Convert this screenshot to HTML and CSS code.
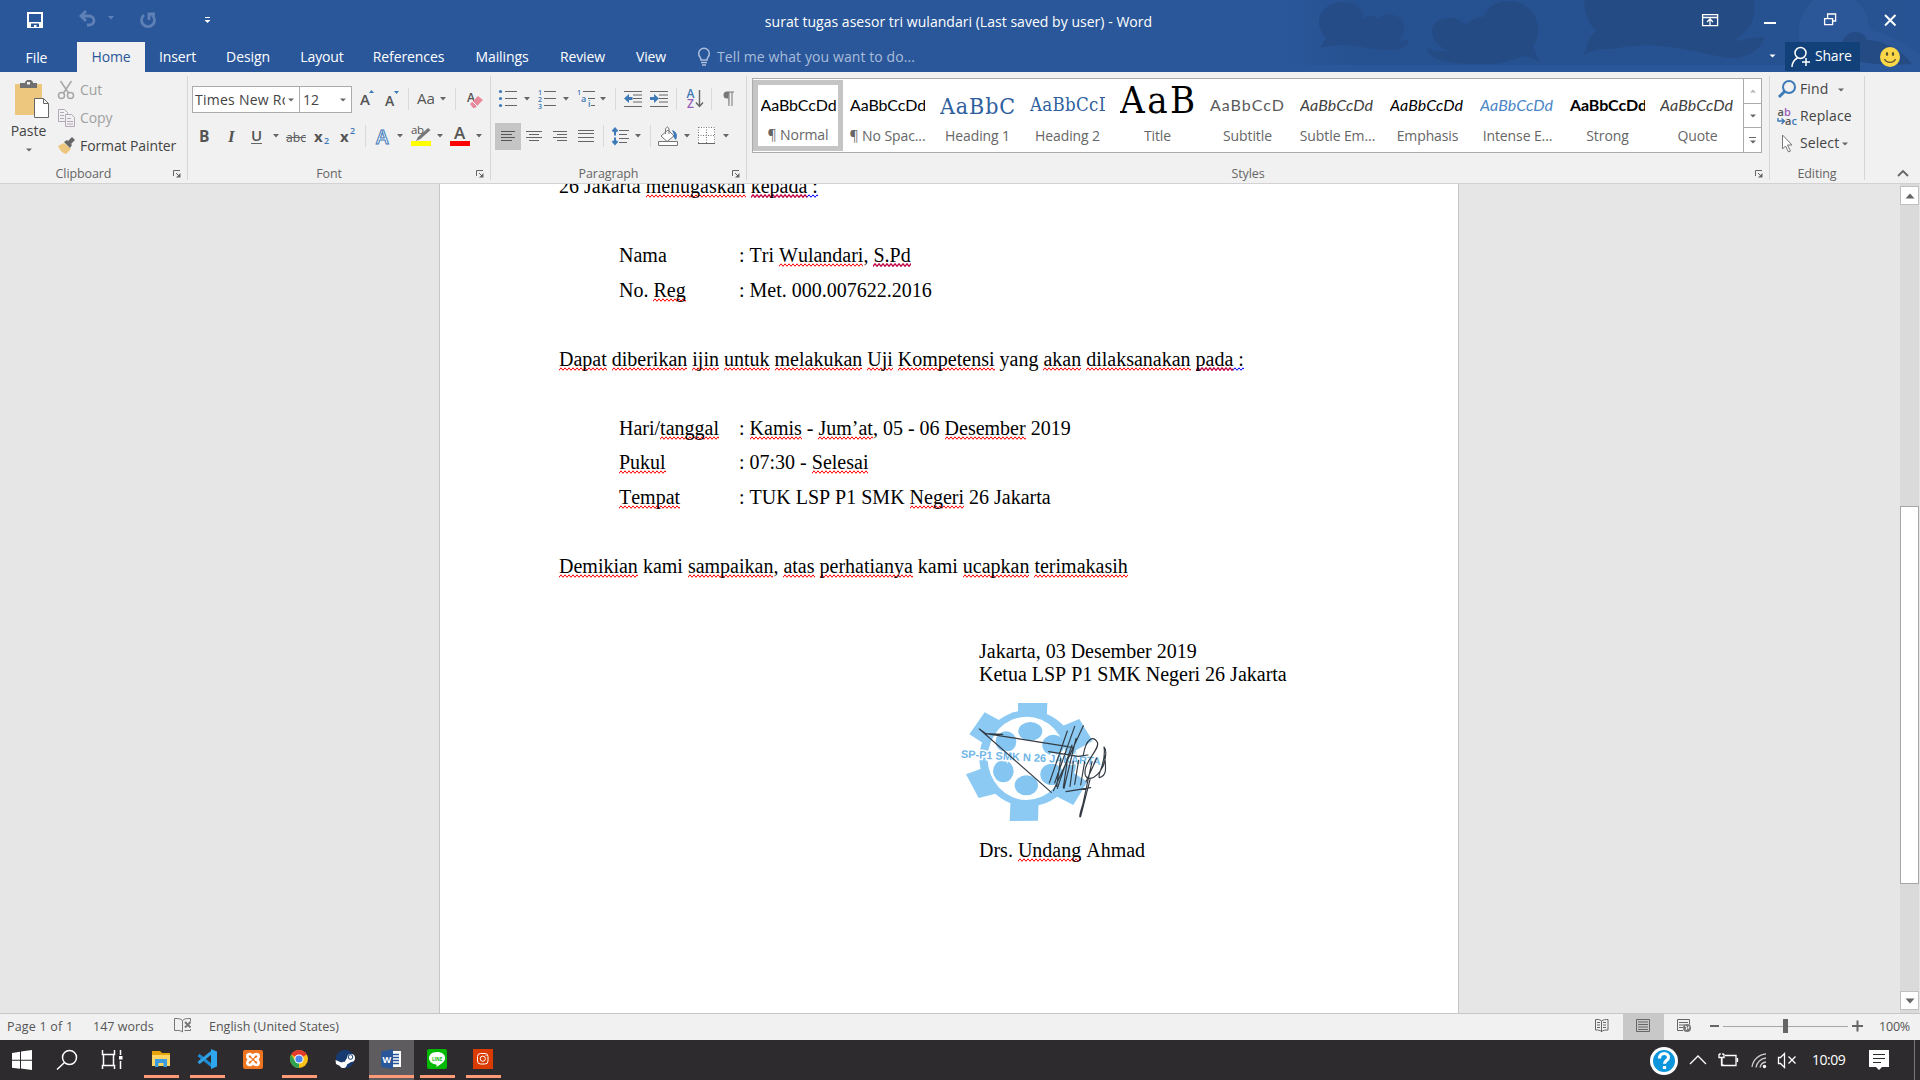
FILE: index.html
```html
<!DOCTYPE html>
<html lang="en">
<head>
<meta charset="utf-8">
<title>surat tugas asesor tri wulandari - Word</title>
<link rel="stylesheet" href="styles.css">
</head>
<body>
<svg class="defs" width="0" height="0">
  <symbol id="dn" viewBox="0 0 6 4"><path d="M0 .4h6L3 3.6z"/></symbol>
  <symbol id="launch" viewBox="0 0 8 8"><path d="M.5 6V.5H7M3 3l3.500 3.500" fill="none" stroke="#666"/><path d="M7.500 3v4.500H3z" fill="#666"/></symbol>
</svg>
<div class="app">
<header class="head">
  <svg class="clouds" width="640" height="65" viewBox="1280 0 640 65">
    <defs><linearGradient id="fade"><stop offset="0" stop-color="#25508f" stop-opacity="0"/><stop offset=".12" stop-color="#25508f" stop-opacity=".8"/><stop offset=".85" stop-color="#25508f" stop-opacity=".75"/><stop offset="1" stop-color="#25508f" stop-opacity=".5"/></linearGradient></defs>
    <path fill="url(#fade)" d="M1280 0h640v65h-640z"/>
    <path fill="#2b5798" d="M1800 42c-4-18 2-30 13-42h42c10 8 14 18 14 30 30 5 40 20 51 24v11h-95z"/>
    <g fill="#244b84">
      <path fill="#254c87" d="M1320 48l6-10c-16-18-2-36 17-36 14 0 20 8 20 17 6-5 12-3 15 0 9-9 26-4 26 8 0 7-3 10-5 14 3 0 6-1 9-1 2 9-19 12-34 9-17-3-34-7-54-1z"/>
      <path d="M1427 48c8 4 16 3 21 3-23-10-20-34 2-33 9 0 12 4 16 7 6-6 14-9 18-8 4-21 50-25 54 10 1 9-2 14-5 20l6 14-14-5c-18 5-23 9-47 8-26 0-50-3-51-16z"/>
      <path d="M1564 0h190c4 22-8 32-20 41 7 0 16-4 30-4-3 16-24 24-42 20-48-10-74-16-109-8-18 0-18 1-29 6l5-16 7-8c-8-8-11-18-12-31z"/>
      <path d="M1842 42c6-14 22-12 25-2 16 0 35 10 45 24-26 2-51 0-69-8z"/>
    </g>
  </svg>
  <div class="titlebar">
    <svg class="quick" width="240" height="42" viewBox="0 0 240 42">
      <path fill="#fff" fill-rule="evenodd" d="M27 12h16v16H27zM29 14h12v8H29zM31 23.500h8V27h-2.500v-2H34v2h-3z"/>
      <g fill="none" stroke="#6081b5" stroke-width="2.800"><path d="M82 16h7a5 4.500 0 0 1 0 9h-2M86 11l-5 5 5 5"/><path d="M144 15a6.500 6.500 0 1 0 8 0M149 20v-6h6"/></g>
      <path fill="#6081b5" d="M108 16h6l-3 3.500z"/><path fill="#fff" d="M205 17h5v1h-5zM204.500 20h6l-3 3z"/>
    </svg>
    <div class="title">surat tugas asesor tri wulandari (Last saved by user) - Word</div>
    <svg width="240" height="42" viewBox="1680 0 240 42" fill="none" stroke="#fff" stroke-width="1.300">
      <path d="M1702.600 14.600h15v11h-15zM1702 17.500h16M1710 25v-6M1707 22l3-3 3 3"/><path stroke-width="2" d="M1764 23h12"/><path d="M1824.600 18.600h8v6h-8zM1827.600 18v-4h8v7h-3"/><path stroke-width="2" d="M1885 15l10.500 10.500M1895.500 15L1885 25.500"/>
    </svg>
  </div>
  <nav class="tabs">
    <span class="tab file">File</span><span class="tab home">Home</span><span class="tab ins">Insert</span><span class="tab des">Design</span><span class="tab lay">Layout</span><span class="tab ref">References</span><span class="tab mail">Mailings</span><span class="tab rev">Review</span><span class="tab view">View</span>
    <svg width="35" height="30" viewBox="682 42 35 30" fill="none" stroke="#a9bddb" stroke-width="1.500"><path d="M701 60c0-3-2.300-3-2.300-6.500a5.300 5.300 0 0 1 10.600 0c0 3.500-2.300 3.500-2.300 6.500z"/><path d="M701 62.500h6M702 65h4"/></svg>
    <span class="tell">Tell me what you want to do...</span>
    <svg class="dnw" width="7" height="4"><use href="#dn"/></svg>
    <div class="share"><svg width="20" height="22" viewBox="0 0 20 22" fill="none" stroke="#fff" stroke-width="1.500"><circle cx="9.500" cy="7" r="5.500"/><path d="M1 21c0-4 2-7 5.500-9M15 12v8M11 16h8"/></svg><span>Share</span></div>
    <svg class="smile" width="22" height="22" viewBox="0 0 22 22"><circle cx="11" cy="11" r="10" fill="#fcd848"/><ellipse cx="8" cy="8" rx="1.200" ry="2" fill="#5b5330"/><ellipse cx="14" cy="8" rx="1.200" ry="2" fill="#5b5330"/><path d="M5.500 13c2 4.500 9 4.500 11 0" fill="none" stroke="#5b5330" stroke-width="1.300"/></svg>
  </nav>
</header>

<section class="ribbon">
  <div class="group clip">
    <div class="body">
      <div class="paste">
        <svg width="38" height="40" viewBox="13 79 38 40"><path fill="#eec77e" d="M15 84h27v31H15z"/><path fill="#707070" d="M20 83h5v-1l2-2h4l2 2v1h4v5H20z"/><path fill="#f1f1f1" d="M27 82h3v2.500h-3z"/><path fill="#fff" stroke="#666" d="M34.500 98.500h9l5 5v14h-14z"/><path fill="none" stroke="#666" d="M43.500 98.500v5h5"/></svg>
        <span>Paste</span><svg class="dng" width="6" height="4"><use href="#dn"/></svg>
      </div>
      <div class="cmds">
        <div class="cmd off"><svg width="18" height="20" viewBox="57 79 18 20" fill="none" stroke="#a6a6a6" stroke-width="1.500"><path d="M60.500 80l8 12M71.500 80l-8 12"/><circle cx="61.500" cy="94.500" r="3"/><circle cx="70.500" cy="94.500" r="3"/></svg><span>Cut</span></div>
        <div class="cmd off"><svg width="18" height="20" viewBox="57 107 18 20" fill="none" stroke="#b2a8b6"><path d="M65 120.500h-6.500v-12h6l3 3v1.500M60 111.500h4M60 114.500h4M60 117.500h4" /><path fill="#f1f1f1" d="M65.500 113.500h6l3 3v9h-9z"/><path d="M67 117.500h4M67 120.500h6M67 123h6"/></svg><span>Copy</span></div>
        <div class="cmd"><svg width="18" height="20" viewBox="57 135 18 20"><path fill="#eec77e" d="M58 145l6-3 7 6-5 5c-4-1-6-4-8-8z"/><path fill="#666" d="M64 141l3-2 1 1 4-4 3 3-4 4 1 1-2 3z"/></svg><span>Format Painter</span></div>
      </div>
    </div>
    <div class="cap"><span>Clipboard</span><svg class="lau" width="8" height="8"><use href="#launch"/></svg></div>
  </div>

  <div class="group font">
    <div class="body col">
      <div class="row">
        <div class="combo fam"><span>Times New Ro</span><svg class="dng" width="6" height="4"><use href="#dn"/></svg></div>
        <div class="combo size"><span>12</span><svg class="dng" width="6" height="4"><use href="#dn"/></svg></div>
        <svg width="136" height="36" viewBox="352 82 136 36">
          <g class="ic"><text class="sb" x="360" y="105" font-size="15">A</text><text class="sb" x="385" y="105.500" font-size="14">A</text><text class="md" x="417" y="104" font-size="15" textLength="18" lengthAdjust="spacingAndGlyphs">Aa</text><text class="sb" x="467" y="102" font-size="12">A</text></g>
          <path fill="#3e7ab8" d="M369 93l2.500-3 2.500 3zM394 91h5l-2.500 3z"/><path fill="#666" d="M440 97h6l-3 3.500z"/>
          <path stroke="#dadada" d="M408.500 88v22M455.500 88v22"/><path fill="#e98a9c" d="M470 104l8-8 5 4-8 8h-2z"/><path stroke="#fff" d="M472 101l5 5"/>
        </svg>
      </div>
      <div class="row">
        <svg width="300" height="36" viewBox="189 118 300 36">
          <g class="ic"><text class="bd" x="199" y="142" font-size="15.500">B</text><text x="228" y="142" font-size="17" class="ser">I</text><text class="sb" x="251" y="141" font-size="15">U</text><text x="286" y="142" font-size="13.500" textLength="20" lengthAdjust="spacingAndGlyphs">abc</text><path d="M286 137.500h20" stroke="#666"/><text class="bd" x="314" y="142" font-size="15">x</text><text class="bd" x="340" y="142" font-size="15">x</text></g>
          <g class="blu"><text class="sb" x="324" y="144" font-size="9">2</text><text class="sb" x="350" y="134" font-size="9">2</text></g>
          <text x="376" y="143.500" font-size="19" font-weight="600" class="glow">A</text>
          <path stroke="#dadada" d="M365.500 125v22"/>
          <g fill="#666"><path d="M273 134h6l-3 3.500zM397 134h6l-3 3.500zM437 134h6l-3 3.500zM476 134h6l-3 3.500z"/></g>
          <text class="ic md" x="411" y="134" font-size="11.500" textLength="13">ab</text><path fill="#777" d="M416 141l2-4 10-9 2.500 2-10 9z"/><path fill="#ff0" d="M411 141h20v5h-20z"/>
          <text class="ic sb" x="454" y="139" font-size="17">A</text><path fill="red" d="M450 141h20v5h-20z"/>
          <path stroke="#666" d="M251 143.500h11"/>
        </svg>
      </div>
    </div>
    <div class="cap"><span>Font</span><svg class="lau" width="8" height="8"><use href="#launch"/></svg></div>
  </div>

  <div class="group para">
    <div class="body col">
      <div class="row">
        <svg width="252" height="36" viewBox="492 82 252 36">
          <g fill="#3e7ab8"><circle cx="500.500" cy="91.500" r="1.600"/><circle cx="500.500" cy="98.500" r="1.600"/><circle cx="500.500" cy="105.500" r="1.600"/></g>
          <g class="blu sb" font-size="7"><text x="538" y="95">1</text><text x="538" y="102">2</text><text x="538" y="108.500">3</text><text x="577" y="95">1</text><text x="581" y="102" font-size="9">a</text><text x="588" y="107" font-size="9">i</text></g>
          <path stroke="#666" d="M505 91.500h12M505 98.500h12M505 105.500h12M544 91.500h12M544 98.500h12M544 105.500h12M583 91.500h12M588 98.500h7M591 105.500h4M624 91.500h18M633 95h9M633 98.500h9M633 102h9M624 106.500h18M650 91.500h18M659 95h9M659 98.500h9M659 102h9M650 106.500h18"/>
          <path fill="#666" d="M524 97h6l-3 3.500zM563 97h6l-3 3.500zM600 97h6l-3 3.500z"/>
          <path stroke="#dadada" d="M615.500 88v22M676.500 88v22M711.500 88v22"/>
          <path fill="#3e7ab8" d="M624 98.500l5-4.500v3h3.500v3H629v3zM659 98.500l-5-4.500v3h-4v3h4v3z"/>
          <text class="blu sb" x="686.500" y="98" font-size="12">A</text><text class="pur sb" x="687" y="108" font-size="12">Z</text><path fill="none" stroke="#666" stroke-width="1.400" d="M699.500 90v16M696 102.500l3.500 4 3.500-4"/>
          <path fill="#777" d="M727 92.500h6M728 91.500v7h-1a3.500 3.500 0 0 1 0-7h7v1h-1.500V106h-1V92.500h-2V106h-1z"/>
        </svg>
      </div>
      <div class="row">
        <svg width="252" height="36" viewBox="492 118 252 36">
          <path fill="#c5c5c5" d="M495 123h26v27h-26z"/>
          <path stroke="#555" d="M501 131.500h14M501 134.500h11M501 137.500h14M501 140.500h11"/>
          <path stroke="#666" d="M526 131.500h16M529 134.500h10M526 137.500h16M529 140.500h10M553 131.500h14M557 134.500h10M553 137.500h14M557 140.500h10M578 130.500h16M578 133.500h16M578 137.500h16M578 141.500h16M619 130.500h10M619 134.500h8M619 138.500h10M619 142.500h8"/>
          <path fill="none" stroke="#3e7ab8" stroke-width="2" d="M615 128.500v15.500M612.500 131.500l2.500-3 2.500 3M612.500 141l2.500 3 2.500-3"/><path stroke="#f1f1f1" stroke-width="2" d="M613 136.500h4"/>
          <path stroke="#dadada" d="M603.500 125v22M650.500 125v22"/><path fill="#666" d="M635 134h6l-3 3.500zM684 134h6l-3 3.500zM723 134h6l-3 3.500z"/>
          <path fill="#fff" stroke="#777" d="M661 136l7-6 6 6-7 5.500zM665.500 134v-5q2-4 3.500 0v5M658.500 141.500h19v4h-19z"/><path fill="#3e7ab8" d="M672 130c5 2 6 5 4 10-2-2-3-3-2-5z"/>
          <path fill="#fff" d="M698 127h17v16h-17z"/><path fill="none" stroke="#777" stroke-dasharray="1 1.500" d="M698.500 127.500h16v16M698.500 127v16M706.500 127v16M698 135.500h17"/><path stroke="#666" d="M698 143.500h17"/>
        </svg>
      </div>
    </div>
    <div class="cap"><span>Paragraph</span><svg class="lau" width="8" height="8"><use href="#launch"/></svg></div>
  </div>

  <div class="group styles">
    <div class="body">
      <div class="gallery">
        <div class="st sel"><b class="pv">AaBbCcDd</b><span>¶ Normal</span></div>
        <div class="st"><b class="pv">AaBbCcDd</b><span>¶ No Spac...</span></div>
        <div class="st"><b class="pv h1">AaBbC</b><span>Heading 1</span></div>
        <div class="st"><b class="pv h2">AaBbCcD</b><span>Heading 2</span></div>
        <div class="st"><b class="pv ti">AaB</b><span>Title</span></div>
        <div class="st"><b class="pv su">AaBbCcD</b><span>Subtitle</span></div>
        <div class="st"><b class="pv it g">AaBbCcDd</b><span>Subtle Em...</span></div>
        <div class="st"><b class="pv it">AaBbCcDd</b><span>Emphasis</span></div>
        <div class="st"><b class="pv it bl">AaBbCcDd</b><span>Intense E...</span></div>
        <div class="st"><b class="pv bo">AaBbCcDd</b><span>Strong</span></div>
        <div class="st"><b class="pv it g">AaBbCcDd</b><span>Quote</span></div>
        <div class="sc"><i><svg class="dnl" width="6" height="4"><use href="#dn"/></svg></i><i><svg class="dng" width="6" height="4"><use href="#dn"/></svg></i><i class="more"><svg class="dng" width="6" height="4"><use href="#dn"/></svg></i></div>
      </div>
    </div>
    <div class="cap"><span>Styles</span><svg class="lau" width="8" height="8"><use href="#launch"/></svg></div>
  </div>

  <div class="group edit">
    <div class="body col">
      <div class="cmd"><svg width="22" height="22" viewBox="1776 78 22 22" fill="none" stroke="#3e7ab8"><circle cx="1789" cy="86" r="6" stroke-width="2"/><path stroke-width="3" d="M1785 90l-6 6"/></svg><span>Find</span><svg class="dng far" width="6" height="4"><use href="#dn"/></svg></div>
      <div class="cmd"><svg width="22" height="22" viewBox="1776 105 22 22"><text class="ic sb" x="1777.500" y="115" font-size="11">a<tspan fill="#9a5fb8">b</tspan></text><text class="ic sb" x="1785" y="124" font-size="11">a<tspan fill="#3e7ab8">c</tspan></text><path fill="none" stroke="#3e7ab8" stroke-width="1.400" d="M1778 117v3h6M1781.500 117.500l3 2.500-3 3"/></svg><span class="rep">Replace</span></div>
      <div class="cmd"><svg width="22" height="22" viewBox="1776 132 22 22"><path fill="#fff" stroke="#777" d="M1782.500 134v14l3-3 3 6 2-1-3-6h4.500z"/></svg><span>Select</span><svg class="dng near" width="6" height="4"><use href="#dn"/></svg></div>
    </div>
    <div class="cap"><span>Editing</span></div>
  </div>
  <svg class="fold" width="12" height="8" viewBox="0 0 12 8"><path d="M1 7l5-5 5 5" fill="none" stroke="#666" stroke-width="1.800"/></svg>
</section>

<main class="work">
  <article class="page">
    <p>26 Jakarta <u>menugaskan</u> <u class="m">kepada</u><u class="b"> :</u></p>
    <p></p>
    <p class="in"><span class="lb">Nama</span>: Tri <u>Wulandari</u>, <u class="m">S.Pd</u></p>
    <p class="in"><span class="lb">No. <u>Reg</u></span>: Met. 000.007622.2016</p>
    <p></p>
    <p><u>Dapat</u> <u>diberikan</u> <u>ijin</u> <u>untuk</u> <u>melakukan</u> <u>Uji</u> <u>Kompetensi</u> yang <u>akan</u> <u>dilaksanakan</u> <u class="m">pada</u><u class="b"> :</u></p>
    <p></p>
    <p class="in"><span class="lb">Hari/<u>tanggal</u></span>: <u>Kamis</u> - <u>Jum’at</u>, 05 - 06 <u>Desember</u> 2019</p>
    <p class="in"><span class="lb"><u>Pukul</u></span>: 07:30 - <u>Selesai</u></p>
    <p class="in"><span class="lb"><u>Tempat</u></span>: TUK LSP P1 SMK <u>Negeri</u> 26 Jakarta</p>
    <p></p>
    <p><u>Demikian</u> kami <u>sampaikan</u>, <u>atas</u> <u>perhatianya</u> kami <u>ucapkan</u> <u>terimakasih</u></p>
    <div class="sign">
      <div>Jakarta, 03 Desember 2019</div>
      <div>Ketua LSP P1 SMK Negeri 26 Jakarta</div>
      <svg class="stamp" width="170" height="135" viewBox="0 0 510 405">
        <g fill="#8ccaf3">
          <path d="M204 24h88l-2 50h-86zM104 52l64 34-32 82-78-50zM388 72l40 66-72 40-40-76zM48 238l60-22 46 76-68 17zM182 310h84l-2 67-85 1zM358 226l54 34-42 70-70-36z"/>
          <ellipse cx="234" cy="190" rx="146" ry="144"/>
        </g>
        <ellipse cx="230" cy="190" rx="117" ry="125" fill="#fff"/>
        <g fill="#84c6f1"><ellipse cx="241" cy="109" rx="36" ry="28"/><ellipse cx="168" cy="140" rx="31" ry="31"/><ellipse cx="310" cy="150" rx="33" ry="31"/><ellipse cx="160" cy="229" rx="31" ry="33"/><ellipse cx="229" cy="271" rx="35" ry="30"/><ellipse cx="305" cy="238" rx="34" ry="32"/></g>
        <text x="32" y="188" transform="rotate(3 32 188)" textLength="420" lengthAdjust="spacingAndGlyphs" class="ring">SP-P1 SMK N 26 JAKARTA</text>
        <g fill="none" stroke="#333a42" stroke-width="3.500" stroke-linecap="round" stroke-linejoin="round">
          <path d="M88 102l20 14 260 41M88 102l216 190M104 116l54 2M400 92l-90 195M374 94l-60 170M352 108l-54 156M378 130l-36 150M296 170l88 14 30-4M332 190l-12 84M352 196l-12 82M370 200l-10 74M386 196l-12 72M404 200l-12 70M366 150l-44 130M400 180c8-50 30-60 42-38 8 18-30 48-36 80-8 40 30 38 54-10 12-38 8-50 2-56 8 46-22 84-14 92 26-8 18-34 16-66M440 190l-32 70M426 200l-28 130c-10 30-10 40-6 34l28-110M422 278l-74 12"/>
        </g>
      </svg>
      <div class="name">Drs. <u>Undang</u> Ahmad</div>
    </div>
  </article>
  <div class="scroll"><i class="sb-btn up"><svg class="dng" width="10" height="6"><use href="#dn"/></svg></i><i class="thumb"></i><i class="sb-btn down"><svg class="dng" width="10" height="6"><use href="#dn"/></svg></i></div>
</main>

<footer class="status">
  <span class="pg">Page 1 of 1</span><span class="wd">147 words</span>
  <svg width="55" height="26" viewBox="154 1014 55 26" fill="none" stroke="#777"><path d="M182.500 1032c-2-2-4-1.500-8-1.500v-12c4 0 6 0 8 2zM182.500 1020.500c2-2 4-2 8-2v3M190.500 1029v1.500h-6"/><path stroke-width="2" d="M185 1022l5.500 5.500M190.500 1022l-5.500 5.500"/></svg>
  <span class="lang">English (United States)</span>
  <svg class="views" width="294" height="26" viewBox="1580 1014 294 26">
    <path fill="#c8c8c8" d="M1623 1014h41v26h-41z"/>
    <g fill="none" stroke="#666"><path d="M1601.500 1032v-11c-2-2-4-1.500-6-1.500v10.500c3 0 4 0 6 1.500 2-1.500 4-1.500 6.500-1.500v-10.500c-2 0-4.500 0-6.500 1.500M1597 1022.500h3M1597 1025h3M1597 1027.500h3M1603 1022.500h3M1603 1025h3M1603 1027.500h3"/><path d="M1636.500 1019.500h13v12h-13zM1638 1022h10M1638 1024.500h10M1638 1027h10M1638 1029.500h10"/><path d="M1683 1030.500h-5.500v-11h12v5M1679 1022.500h9M1679 1025h6M1679 1027.500h4"/></g>
    <circle cx="1687" cy="1028" r="4" fill="#777"/><path fill="none" stroke="#f1f1f1" d="M1685 1026l2 1-1 3M1689 1026l-1 3"/>
    <path stroke="#666" stroke-width="2" d="M1710 1026h9M1852 1026h11M1857.500 1020.500v11"/><path stroke="#a6a6a6" d="M1723 1026.500h125"/><path fill="#666" d="M1783 1019h5v14h-5z"/>
  </svg>
  <span class="pct">100%</span>
</footer>

<div class="taskbar">
  <svg width="138" height="40" viewBox="0 1040 138 40"><path fill="#fff" d="M12 1053l8-1.200v8H12zM21 1051.600l11-1.600v9.800H21zM12 1060.800h8v8l-8-1.100zM21 1060.800h11v9.200l-11-1.500z"/><g fill="none" stroke="#fff" stroke-width="1.500"><circle cx="69.500" cy="1057.500" r="7"/><path d="M64.500 1062.500l-7.500 7M102.500 1050v4.500h12V1050M102.500 1069v-3.500h12v3.500M103.500 1054.500v11M113.500 1054.500v11M120.500 1050v5M120.500 1061v8"/></g><path fill="#fff" d="M119 1056h3.500v3.500H119z"/></svg>
  <div class="app-btn on"><svg width="46" height="34" viewBox="138 1040 46 34"><path fill="#e5a50a" d="M152 1051h8l2 2h8v4h-18z"/><path fill="#fdd663" d="M152 1055h18v11h-18z"/><path fill="#3d9be0" d="M155 1067v-8h12v8h-3.500v-4h-5v4z"/></svg></div>
  <div class="app-btn on"><svg width="46" height="34" viewBox="184 1040 46 34"><path fill="none" stroke="#1f8ad2" stroke-width="3" d="M198.500 1055l13 10.500"/><path fill="none" stroke="#2fa0e6" stroke-width="3" d="M198.500 1063l13-10.500"/><path fill="#2fa7ee" d="M211 1049l6 2.500v15l-6 2.500z"/></svg></div>
  <div class="app-btn"><svg width="46" height="34" viewBox="230 1040 46 34"><rect x="243" y="1050" width="20" height="19" rx="2" fill="#ee7420"/><path fill="none" stroke="#fff" stroke-width="2.600" stroke-linejoin="round" d="M250.500 1059.500c-4-1-4-5-1-5.500 2 0 3 1.500 3.500 3 .5-1.500 1.500-3 3.500-3 3 .5 3 4.500-1 5.500 4 1 4 5 1 5.500-2 0-3-1.500-3.500-3-.5 1.500-1.500 3-3.500 3-3-.5-3-4.500 1-5.500z"/></svg></div>
  <div class="app-btn on"><svg width="46" height="34" viewBox="276 1040 46 34"><circle cx="299" cy="1059" r="9" fill="#fbc116"/><path fill="#e33b2e" d="M299 1059l-7.800-4.500a9 9 0 0 1 15.600 0z"/><path fill="#31a350" d="M299 1059l0 9a9 9 0 0 1-7.800-13.500l4 6.500z"/><circle cx="299" cy="1059" r="4.600" fill="#fff"/><circle cx="299" cy="1059" r="3.600" fill="#4a86ee"/></svg></div>
  <div class="app-btn"><svg width="46" height="34" viewBox="322 1040 46 34"><circle cx="345" cy="1059" r="9.300" fill="#173a70"/><path fill="#fff" d="M335.500 1060l6 2.500c1-.8 2-.8 3-.6l2.500-4a4 4 0 1 1 4 4l-4 2.500c0 4-6 5-7 1.500l-4-2z"/><circle cx="350.500" cy="1057" r="2.300" fill="none" stroke="#173a70"/></svg></div>
  <div class="app-btn on active"><svg width="46" height="34" viewBox="368 1040 46 34"><path fill="#fff" d="M391 1051h10v16h-10z"/><path stroke="#2a579a" stroke-width="1.300" d="M393 1054.500h6M393 1057.500h6M393 1060.500h6M393 1063.500h6"/><path fill="#2a579a" d="M381 1051.500l12-2.500v20l-12-2z"/><text x="382.500" y="1063" font-size="9" font-weight="bold" fill="#fff">W</text></svg></div>
  <div class="app-btn on"><svg width="46" height="34" viewBox="414 1040 46 34"><rect x="427" y="1049" width="20" height="20" rx="2" fill="#00b900"/><path fill="#fff" d="M437 1052c10 0 10 9 4 12l-4.500 3v-2.500c-10-1-10-12.500.5-12.500z"/><text x="432" y="1060.500" font-size="4.500" font-weight="bold" fill="#00b900">LINE</text></svg></div>
  <div class="app-btn on"><svg width="46" height="34" viewBox="460 1040 46 34"><path fill="#da3b01" d="M473 1049h20v20h-20z"/><g fill="none" stroke="#fff"><rect x="477.500" y="1053.500" width="10.500" height="10.500" rx="3"/><circle cx="482.800" cy="1058.700" r="2.600"/></g><circle cx="486" cy="1055.500" r=".6" fill="#fff"/></svg></div>
  <svg class="tray" width="160" height="40" viewBox="1646 1040 160 40"><circle cx="1664" cy="1061" r="14" fill="#fff"/><circle cx="1664" cy="1061" r="11" fill="#0e96dc"/><path fill="none" stroke="#fff" stroke-width="3.200" d="M1659.500 1058.500c0-7 9.500-6 9-.8-.3 3-4 2.800-4 6M1664.500 1066v3"/><g fill="none" stroke="#fff" stroke-width="1.300"><path d="M1690 1064l8-8 8 8M1725 1055.500h11v10h-14v-7M1737.500 1058v4M1719 1054v3.500h5V1054M1720 1053v2M1723 1053v2M1721.500 1058v7h2"/><path d="M1780.500 1057.500h-2v6h2l4 4v-14zM1788.500 1056.500l7 7M1795.500 1056.500l-7 7"/><g stroke="#ccc"><path d="M1752 1067a15 15 0 0 1 14-13M1756 1067.500a11 11 0 0 1 10-9.500M1760 1067.500a7 7 0 0 1 6-5.500"/></g></g><circle cx="1764.500" cy="1066.500" r="1.700" fill="#fff"/></svg>
  <span class="clock">10:09</span>
  <svg width="74" height="40" viewBox="1846 1040 74 40"><path fill="#fff" d="M1869 1050h20v17h-7l-3 3-3-3h-7z"/><path stroke="#2b292b" stroke-width="1.200" d="M1873 1054.500h12M1873 1058.500h12M1873 1062.500h8"/><path stroke="#777" d="M1914.500 1040v40"/></svg>
</div>
</div>
</body>
</html>
```
FILE: styles.css
```css
* { box-sizing: border-box; }
body { margin: 0; background: #e6e6e6; font: 14px "Open Sans", "Noto Sans", sans-serif; color: #444; }
svg { display: block; flex: none; }
i, b { font-style: normal; font-weight: 400; }
.defs { position: absolute; }
.app { width: 1920px; height: 1080px; overflow: hidden; display: flex; flex-direction: column; white-space: nowrap; }
.dng { fill: #666; }
.dnl { fill: #b5b5b5; transform: scaleY(-1); }
.dnw { fill: #fff; margin: 12px 9px 0 auto; }

.head { position: relative; height: 72px; background: #2a579a; color: #fff; }
.clouds { position: absolute; right: 0; top: 0; }
.titlebar { position: relative; display: flex; height: 42px; }
.title { flex: 1; text-align: center; line-height: 43px; padding-right: 3px; font-size: 14px; letter-spacing: .03px; }
.tabs { position: relative; display: flex; height: 30px; line-height: 29px; }
.tab { text-align: center; font-size: 14px; letter-spacing: -.1px; }
.file { width: 77px; padding-right: 4px; line-height: 31px; }
.home { width: 68px; background: #f1f1f1; color: #2a579a; }
.ins { width: 65px; } .des { width: 76px; } .lay { width: 72px; } .ref { width: 101px; }
.mail { width: 86px; } .rev { width: 75px; } .view { width: 62px; }
.tell { color: #a9bddb; letter-spacing: .1px; }
.share { width: 75px; height: 29px; background: #124078; display: flex; align-items: center; gap: 4px; padding-left: 6px; letter-spacing: -.2px; }
.share span { margin-top: -2px; }
.smile { margin: 4px 19px 0; }

.ribbon { display: flex; height: 112px; padding-top: 4px; background: #f1f1f1; border-bottom: 1px solid #d2d2d2; }
.group { height: 104px; border-right: 1px solid #d6d6d6; display: flex; flex-direction: column; }
.clip { width: 188px; } .font { width: 303px; } .para { width: 256px; } .styles { width: 1023px; } .edit { width: 95px; }
.body { display: flex; height: 84px; }
.col { flex-direction: column; }
.cap { display: flex; height: 20px; padding-top: 5px; line-height: 18px; font-size: 12.5px; color: #666; letter-spacing: -.1px; }
.cap span { flex: 1; text-align: center; padding-right: 6px; }
.edit .cap span { padding-right: 0; }
.lau { margin: 5px 6px 0 0; }
.paste { width: 57px; display: flex; flex-direction: column; align-items: center; padding: 3px 0 0 6px; }
.paste span { line-height: 24px; margin-left: -6px; }
.paste .dng { margin: 5px 6px 0 0; }
.cmds { display: flex; flex-direction: column; }
.cmd { display: flex; align-items: center; height: 28px; gap: 5px; letter-spacing: -.1px; }
.cmd span { margin-top: -2px; }
.off { color: #a0a0a0; }
.row { display: flex; height: 36px; }
.font .col, .para .col { padding-top: 6px; }
.font .row { padding-left: 1px; }
.font .row:first-child { padding-left: 4px; }
.para .row { padding-left: 1px; }
.combo { height: 27px; margin-top: 4px; border: 1px solid #ababab; background: #fff; display: flex; align-items: center; padding: 0 5px 0 2px; justify-content: space-between; }
.combo span { overflow: hidden; }
.fam { width: 108px; letter-spacing: .25px; } .fam span { width: 90px; }
.size { width: 52px; border-left: 0; padding-left: 3px; }
text { font-family: "Open Sans", sans-serif; }
.ic { fill: #555; } .md { font-weight: 500; } .sb { font-weight: 600; } .bd { font-weight: 700; }
.ser { font-family: "Liberation Serif", serif; font-weight: 700; font-style: italic; }
.blu { fill: #3e7ab8; } .pur { fill: #9a5fb8; }
.glow { fill: #fff; stroke: #3e7ab8; stroke-width: 1px; }
.gallery { display: flex; width: 1010px; height: 75px; margin: 2px 0 0 5px; background: #fff; border: 1px solid #ababab; }
.st { width: 90px; height: 73px; padding: 7px 1px 0 0; display: flex; flex-direction: column; align-items: center; color: #666; }
.st span { line-height: 22px; margin-top: 1px; letter-spacing: -.1px; }
.sel { height: 71px; margin-top: 1px; padding: 1px 0 0; border: 5px solid #c5c5c5; }
.st.sel span { margin-top: 2px; }
.pv { width: 75px; height: 38px; line-height: 38px; overflow: hidden; font-family: Lato, sans-serif; font-size: 16px; letter-spacing: -.1px; color: #000; }
.h1, .h2, .ti { font-family: "DejaVu Serif Condensed", "DejaVu Serif", serif; color: #2f5f9e; }
.h1 { font-size: 23px; letter-spacing: .9px; padding-top: 1px; } .h2 { font-size: 18.5px; letter-spacing: .3px; } .ti { font-size: 38px; letter-spacing: 2.5px; color: #000; line-height: 28px; }
.su { color: #5a5a5a; letter-spacing: 1px; } .it { font-style: italic; letter-spacing: .1px; } .g { color: #404040; } .bl { color: #4a86c8; } .bo { font-weight: 700; }
.sc { margin-left: auto; width: 18px; border-left: 1px solid #ababab; display: flex; flex-direction: column; }
.sc i { flex: 1; display: flex; align-items: center; justify-content: center; }
.sc i + i { border-top: 1px solid #ababab; }
.more { flex-direction: column; } .more::before { content: ""; width: 7px; height: 1px; background: #666; margin-bottom: 2px; }
.edit .cmd { height: 27px; padding-left: 6px; gap: 2px; letter-spacing: .1px; }
.far { margin-left: 8px; } .near { margin-left: 1px; }
.fold { margin: 93px 0 0 32px; }

.work { height: 829px; display: flex; overflow: hidden; }
.page { width: 1020px; height: 900px; margin: -15px 0 0 439px; padding-left: 119px; background: #fff; border: solid #c6c6c6; border-width: 0 1px; color: #000; font: 20px "Liberation Serif", serif; font-kerning: none; }
.page p { margin: 0; height: 34.5px; line-height: 34.5px; }
.page .in { padding-left: 60px; }
.lb { display: inline-block; width: 120px; }
u { text-decoration: none; padding-bottom: 1px; background: url("data:image/svg+xml,%3Csvg xmlns='http://www.w3.org/2000/svg' width='4' height='4'%3E%3Cpath d='M-.5 3.9L2 .8L4.500 3.900' fill='none' stroke='%23ff0000' stroke-width='1'/%3E%3C/svg%3E") repeat-x left bottom; }
.m { background-image: url("data:image/svg+xml,%3Csvg xmlns='http://www.w3.org/2000/svg' width='4' height='4'%3E%3Cpath d='M-.5 3.9L2 .8L4.500 3.900' fill='none' stroke='%23c00040' stroke-width='1.300'/%3E%3C/svg%3E"); }
.b { background-image: url("data:image/svg+xml,%3Csvg xmlns='http://www.w3.org/2000/svg' width='4' height='4'%3E%3Cpath d='M-.5 3.9L2 .8L4.500 3.900' fill='none' stroke='%230000ff' stroke-width='1'/%3E%3C/svg%3E"); }
.sign { margin: 57px 0 0 420px; line-height: 23px; }
.stamp { margin: 9px 0 9px -29px; }
.ring { font: bold 33px "Liberation Sans", sans-serif; fill: #6fb6e8; stroke: #fff; stroke-width: 9px; paint-order: stroke; }
.scroll { width: 20px; margin-left: auto; padding: 2px 0 3px; display: flex; flex-direction: column; background: linear-gradient(90deg, #dadada 19px, #e6e6e6 19px); }
.sb-btn { width: 19px; height: 19px; background: #fff; border: 1px solid #c0c0c0; display: flex; align-items: center; justify-content: center; }
.up svg { transform: scaleY(-1); }
.thumb { width: 19px; height: 378px; margin-top: 301px; background: #fff; border: 1px solid #a6a6a6; }
.down { margin-top: auto; }

.status { display: flex; height: 27px; background: #f1f1f1; border-top: 1px solid #c6c6c6; font-size: 12.5px; line-height: 26px; color: #555; }
.pg { width: 93px; padding-left: 7px; letter-spacing: .2px; } .wd { width: 61px; }
.views { margin-left: auto; }
.pct { width: 46px; padding-left: 5px; letter-spacing: -.2px; }
.taskbar { display: flex; height: 40px; background: #2d2b2d; color: #fff; }
.app-btn { width: 46px; height: 40px; }
.on::after { content: ""; display: block; width: 35px; height: 3px; margin: 1px 0 0 6px; background: #ff9a76; }
.active { background: linear-gradient(90deg, transparent 1px, #5e5c5e 1px); }
.active::after { width: 45px; margin-left: 1px; }
.tray { margin-left: auto; }
.clock { width: 40px; padding-left: 6px; line-height: 40px; font-size: 14px; letter-spacing: -.5px; }
```
